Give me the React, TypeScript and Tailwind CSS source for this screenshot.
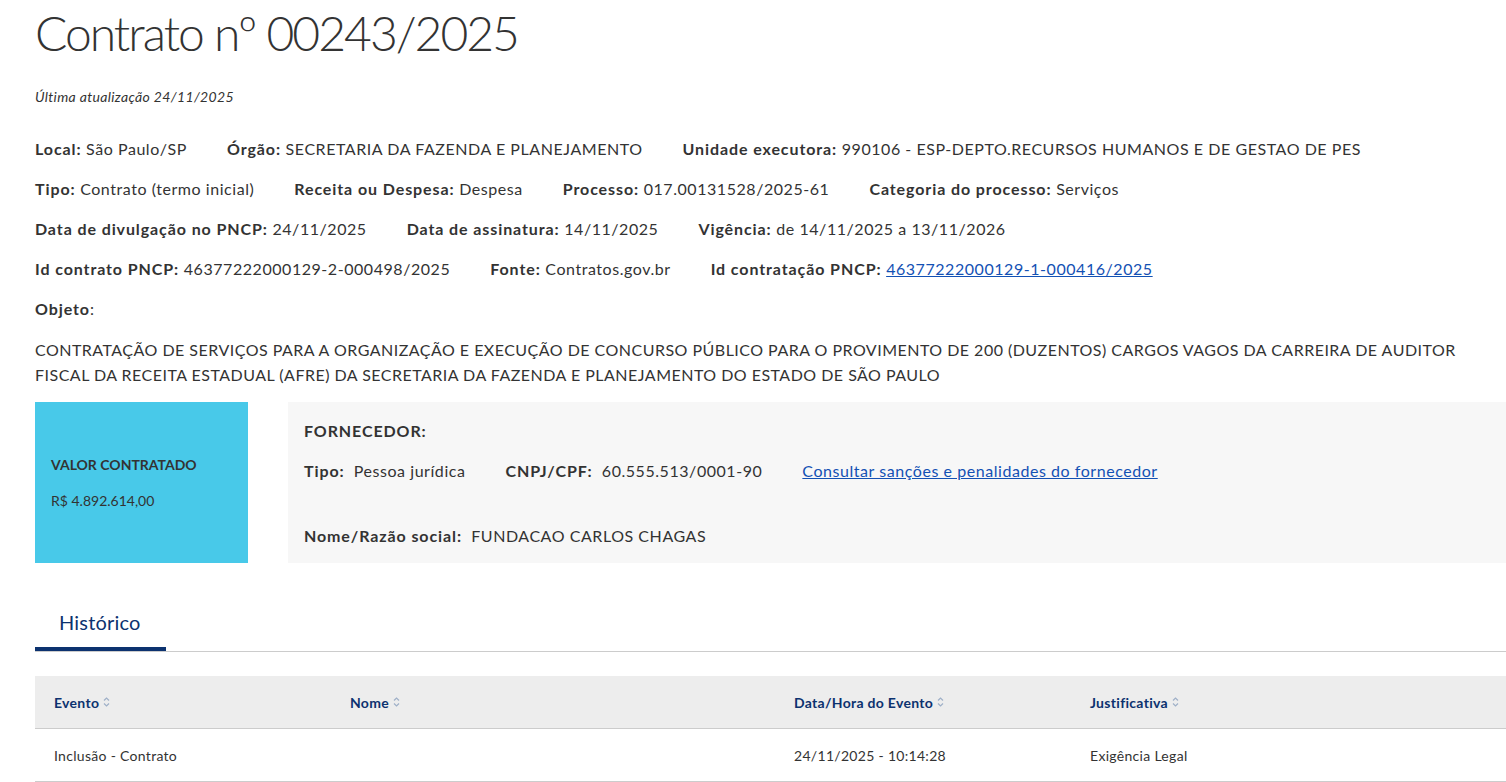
import { ReactNode } from "react";

function Field({ label, children }: { label: string; children: ReactNode }) {
  return (
    <span className="whitespace-nowrap">
      <span className="font-bold tracking-[0.9px]">{label}:</span> {children}
    </span>
  );
}

function SortIcon() {
  return (
    <svg className="ml-[4px] inline-block h-[10px] w-[7px]" viewBox="0 0 7 10" fill="none">
      <path d="M1 3.5 L3.5 1 L6 3.5" stroke="#9fb0c8" strokeWidth="1.2" />
      <path d="M1 6.5 L3.5 9 L6 6.5" stroke="#9fb0c8" strokeWidth="1.2" />
    </svg>
  );
}

const columns = [
  { label: "Evento", w: "w-[296px]" },
  { label: "Nome", w: "w-[444px]" },
  { label: "Data/Hora do Evento", w: "w-[296px]" },
  { label: "Justificativa", w: "flex-1" },
];

const historico = [
  { evento: "Inclusão - Contrato", nome: "", data: "24/11/2025 - 10:14:28", justificativa: "Exigência Legal" },
];

export default function App() {
  return (
    <div className="min-h-screen w-[1506px] overflow-hidden bg-white pl-[35px] font-['Lato','Noto_Sans',sans-serif] text-[16px] text-[#333333]">
      <h1 className="pt-[3px] text-[48px] font-light leading-[60px] tracking-[-2px]">Contrato nº 00243/2025</h1>

      <p className="mt-[24px] text-[14px] italic leading-[20px] tracking-[0.35px]">Última atualização 24/11/2025</p>

      <div className="mt-[30px] flex flex-col leading-[24px] tracking-[0.55px]">
        <div className="flex gap-[40px]">
          <Field label="Local">São Paulo/SP</Field>
          <Field label="Órgão">SECRETARIA DA FAZENDA E PLANEJAMENTO</Field>
          <Field label="Unidade executora">990106 - ESP-DEPTO.RECURSOS HUMANOS E DE GESTAO DE PES</Field>
        </div>
        <div className="mt-[16px] flex gap-[40px]">
          <Field label="Tipo">Contrato (termo inicial)</Field>
          <Field label="Receita ou Despesa">Despesa</Field>
          <Field label="Processo">017.00131528/2025-61</Field>
          <Field label="Categoria do processo">Serviços</Field>
        </div>
        <div className="mt-[16px] flex gap-[40px]">
          <Field label="Data de divulgação no PNCP">24/11/2025</Field>
          <Field label="Data de assinatura">14/11/2025</Field>
          <Field label="Vigência">de 14/11/2025 a 13/11/2026</Field>
        </div>
        <div className="mt-[16px] flex gap-[40px]">
          <Field label="Id contrato PNCP">46377222000129-2-000498/2025</Field>
          <Field label="Fonte">Contratos.gov.br</Field>
          <Field label="Id contratação PNCP">
            <a href="#" className="text-[#1351b4] underline">46377222000129-1-000416/2025</a>
          </Field>
        </div>
        <div className="mt-[16px]">
          <span className="font-bold tracking-[0.9px]">Objeto</span>:
        </div>
        <p className="mt-[16px] leading-[25px] tracking-[0.48px]">
          CONTRATAÇÃO DE SERVIÇOS PARA A ORGANIZAÇÃO E EXECUÇÃO DE CONCURSO PÚBLICO PARA O PROVIMENTO DE 200 (DUZENTOS) CARGOS VAGOS DA CARREIRA DE AUDITOR
          <br />
          FISCAL DA RECEITA ESTADUAL (AFRE) DA SECRETARIA DA FAZENDA E PLANEJAMENTO DO ESTADO DE SÃO PAULO
        </p>
      </div>

      <div className="mt-[15px] flex h-[161px] gap-[40px]">
        <div className="flex w-[213px] flex-col justify-center bg-[#48c9e9] px-[16px] text-[14px]">
          <div className="font-bold leading-[20px]">VALOR CONTRATADO</div>
          <div className="mt-[16px] leading-[20px]">R$ 4.892.614,00</div>
        </div>
        <div className="flex-1 bg-[#f7f7f7] px-[16px] pt-[17px] leading-[24px] tracking-[0.55px]">
          <div className="font-bold tracking-[0.9px]">FORNECEDOR:</div>
          <div className="mt-[16px] flex gap-[40px]">
            <span>
              <span className="font-bold tracking-[0.9px]">Tipo:</span>&nbsp; Pessoa jurídica
            </span>
            <span>
              <span className="font-bold tracking-[0.9px]">CNPJ/CPF:</span>&nbsp; 60.555.513/0001-90
            </span>
            <a href="#" className="text-[#1351b4] underline">Consultar sanções e penalidades do fornecedor</a>
          </div>
          <div className="mt-[41px]">
            <span className="font-bold tracking-[0.9px]">Nome/Razão social:</span>&nbsp; FUNDACAO CARLOS CHAGAS
          </div>
        </div>
      </div>

      <div className="mt-[44px] border-b border-[#cccccc]">
        <div className="inline-block w-[131px] border-b-[4px] border-[#0c326f] pb-[10px] pl-[24px] text-[20px] leading-[30px] tracking-[0.2px] text-[#0c326f]">
          Histórico
        </div>
      </div>

      <div className="mt-[24px] text-[14px] tracking-[0.3px]">
        <div className="flex h-[53px] items-center border-b border-[#cccccc] bg-[#ededed] font-bold text-[#0c326f]">
          {columns.map((c) => (
            <div key={c.label} className={`${c.w} flex items-center px-[19px]`}>
              {c.label}
              <SortIcon />
            </div>
          ))}
        </div>
        {historico.map((h) => (
          <div key={h.data} className="flex h-[53px] items-center border-b border-[#cccccc]">
            <div className="w-[296px] px-[19px]">{h.evento}</div>
            <div className="w-[444px] px-[19px]">{h.nome}</div>
            <div className="w-[296px] px-[19px]">{h.data}</div>
            <div className="flex-1 px-[19px]">{h.justificativa}</div>
          </div>
        ))}
      </div>
    </div>
  );
}
